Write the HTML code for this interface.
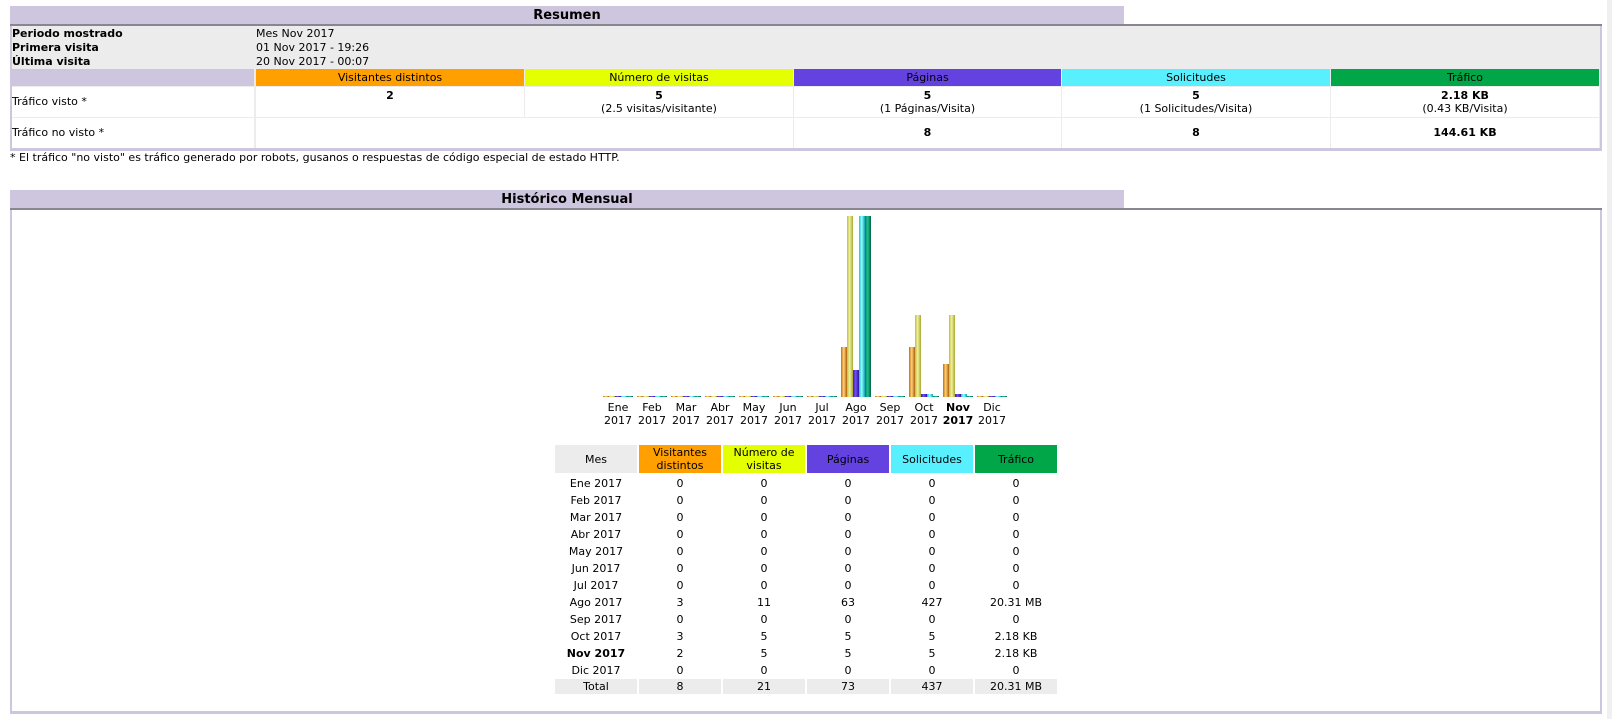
<!DOCTYPE html>
<html><head><meta charset="utf-8">
<style>
body{margin:0;background:#fff;font-family:"DejaVu Sans","Liberation Sans",sans-serif;font-size:11px;color:#000;width:1612px;height:719px;overflow:hidden;position:relative}
.a{position:absolute}
.tab{position:absolute;left:10px;width:1114px;background:#cec6de;font-weight:bold;font-size:13px;text-align:center}
.c{position:absolute;text-align:center}
.b{font-weight:bold}
.bar{position:absolute;width:6px;bottom:322px}
.o{background:linear-gradient(to right,#c07000,#ffd080 45%,#b06000)}
.y{background:linear-gradient(to right,#c0c040,#f0f0a0 45%,#a8a830)}
.p{background:linear-gradient(to right,#4020b0,#7050f0 45%,#3010a0)}
.h{background:linear-gradient(to right,#20c0d0,#90ffff 45%,#10a0b0)}
.g{background:linear-gradient(to right,#008060,#20c090 45%,#006040)}
</style></head><body>
<div class="a" style="left:1607px;top:0;width:5px;height:719px;background:#f0f0f0"></div>

<div class="tab" style="top:6px;height:18px;line-height:19px">Resumen</div>
<div class="a" style="left:10px;top:24px;width:1592px;height:127px;background:#cec6de"></div>
<div class="a" style="left:10px;top:24px;width:1592px;height:2px;background:#8a8690"></div>
<div class="a" style="left:12px;top:26px;width:1588px;height:122px;background:#ececec"></div>
<div class="a b" style="left:12px;top:27px;line-height:14px">Periodo mostrado<br>Primera visita<br>Última visita</div>
<div class="a" style="left:256px;top:27px;line-height:14px">Mes Nov 2017<br>01 Nov 2017 - 19:26<br>20 Nov 2017 - 00:07</div>
<div class="a" style="left:12px;top:69px;width:242px;height:17px;background:#cec6de"></div>
<div class="c" style="left:256px;top:69px;width:268px;height:17px;line-height:17px;background:#ff9f00">Visitantes distintos</div>
<div class="c" style="left:525px;top:69px;width:268px;height:17px;line-height:17px;background:#e4ff00">Número de visitas</div>
<div class="c" style="left:794px;top:69px;width:267px;height:17px;line-height:17px;background:#6442e0">Páginas</div>
<div class="c" style="left:1062px;top:69px;width:268px;height:17px;line-height:17px;background:#58f0ff">Solicitudes</div>
<div class="c" style="left:1331px;top:69px;width:268px;height:17px;line-height:17px;background:#00a648">Tráfico</div>
<!-- visto row -->
<div class="a" style="left:12px;top:87px;width:242px;height:30px;background:#fff;line-height:30px">Tráfico visto *</div>
<div class="c" style="left:256px;top:87px;width:268px;height:30px;background:#fff;line-height:13px;padding-top:2px;box-sizing:border-box"><b>2</b></div>
<div class="c" style="left:525px;top:87px;width:268px;height:30px;background:#fff;line-height:13px;padding-top:2px;box-sizing:border-box"><b>5</b><br>(2.5 visitas/visitante)</div>
<div class="c" style="left:794px;top:87px;width:267px;height:30px;background:#fff;line-height:13px;padding-top:2px;box-sizing:border-box"><b>5</b><br>(1 Páginas/Visita)</div>
<div class="c" style="left:1062px;top:87px;width:268px;height:30px;background:#fff;line-height:13px;padding-top:2px;box-sizing:border-box"><b>5</b><br>(1 Solicitudes/Visita)</div>
<div class="c" style="left:1331px;top:87px;width:268px;height:30px;background:#fff;line-height:13px;padding-top:2px;box-sizing:border-box"><b>2.18 KB</b><br>(0.43 KB/Visita)</div>
<!-- no visto row -->
<div class="a" style="left:12px;top:118px;width:242px;height:30px;background:#fff;line-height:30px">Tráfico no visto *</div>
<div class="c" style="left:256px;top:118px;width:537px;height:30px;background:#fff"></div>
<div class="c b" style="left:794px;top:118px;width:267px;height:30px;background:#fff;line-height:30px">8</div>
<div class="c b" style="left:1062px;top:118px;width:268px;height:30px;background:#fff;line-height:30px">8</div>
<div class="c b" style="left:1331px;top:118px;width:268px;height:30px;background:#fff;line-height:30px">144.61 KB</div>
<div class="a" style="left:10px;top:151px;line-height:14px">* El tráfico "no visto" es tráfico generado por robots, gusanos o respuestas de código especial de estado HTTP.</div>

<div class="tab" style="top:190px;height:18px;line-height:19px">Histórico Mensual</div>
<div class="a" style="left:10px;top:208px;width:1592px;height:506px;background:#cec6de"></div>
<div class="a" style="left:10px;top:208px;width:1592px;height:2px;background:#8a8690"></div>
<div class="a" style="left:12px;top:210px;width:1588px;height:501px;background:#fff"></div>

<div id="chart"></div>
<div id="tbl"></div>
<script>
var m=["Ene","Feb","Mar","Abr","May","Jun","Jul","Ago","Sep","Oct","Nov","Dic"];
var H={7:[50,181,27,181,181],9:[50,82,3,3,1],10:[33,82,3,3,1]};
var cl=["o","y","p","h","g"],s="";
for(var i=0;i<12;i++){var x=603+i*34,hh=H[i]||[1,1,1,1,1];
for(var k=0;k<5;k++)s+='<div class="bar '+cl[k]+'" style="left:'+(x+k*6)+'px;height:'+hh[k]+'px"></div>';
s+='<div class="c'+(i==10?' b':'')+'" style="left:'+(x-5)+'px;top:401px;width:40px;line-height:13px">'+m[i]+'<br>2017</div>';}
document.getElementById("chart").innerHTML=s;
var D={7:["3","11","63","427","20.31 MB"],9:["3","5","5","5","2.18 KB"],10:["2","5","5","5","2.18 KB"]};
var L=[555,639,723,807,891,975],t="";
var hd=[["Mes","#ececec"],["Visitantes<br>distintos","#ff9f00"],["Número de<br>visitas","#e4ff00"],["Páginas","#6442e0"],["Solicitudes","#58f0ff"],["Tráfico","#00a648"]];
for(var j=0;j<6;j++)t+='<div class="c" style="left:'+L[j]+'px;top:445px;width:82px;height:28px;background:'+hd[j][1]+';display:flex;align-items:center;justify-content:center;line-height:13px">'+hd[j][0]+'</div>';
for(var i=0;i<12;i++){var d=D[i]||["0","0","0","0","0"],r=[m[i]+" 2017"].concat(d);
for(var j=0;j<6;j++)t+='<div class="c'+(i==10&&j==0?' b':'')+'" style="left:'+L[j]+'px;top:'+(475+i*17)+'px;width:82px;line-height:17px">'+r[j]+'</div>';}
var tt=["Total","8","21","73","437","20.31 MB"];
for(var j=0;j<6;j++)t+='<div class="c" style="left:'+L[j]+'px;top:679px;width:82px;height:15px;line-height:15px;background:#ececec">'+tt[j]+'</div>';
document.getElementById("tbl").innerHTML=t;
</script>
</body></html>
